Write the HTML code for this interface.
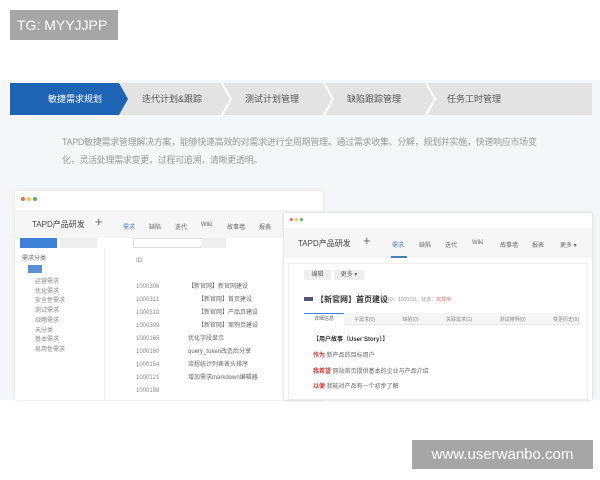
<!DOCTYPE html>
<html><head><meta charset="utf-8"><style>
*{margin:0;padding:0;box-sizing:border-box}
body{width:600px;height:480px;background:#fff;position:relative;overflow:hidden;font-family:"Liberation Sans","Noto Sans CJK SC",sans-serif}
.a{position:absolute}
.t{font-size:6px;color:#666;white-space:nowrap}
</style></head><body>
<div class="a" style="left:10px;top:10px;width:108px;height:30px;background:#a6a6a6;color:#fff;font-size:14px;line-height:30px;padding-left:7px;white-space:nowrap;overflow:hidden">TG: MYYJJPP</div>
<div class="a" style="left:0;top:80px;width:600px;height:320px;background:#f5f6f7"></div>
<svg class="a" style="left:10px;top:83px" width="582" height="32">
<rect x="0" y="0" width="582" height="32" fill="#e3e3e3"/>
<polygon points="0,0 109,0 118,16 109,32 0,32" fill="#1e64b4"/>
<polyline points="212,0 221,16 212,32" fill="none" stroke="#fff" stroke-width="2"/>
<polyline points="314,0 323,16 314,32" fill="none" stroke="#fff" stroke-width="2"/>
<polyline points="416,0 425,16 416,32" fill="none" stroke="#fff" stroke-width="2"/>
</svg>
<div class="a" style="left:10px;top:83px;width:580px;height:32px;font-size:9px;line-height:32px;color:#555">
<span class="a" style="left:38px;color:#fff">敏捷需求规划</span>
<span class="a" style="left:132px">迭代计划&amp;跟踪</span>
<span class="a" style="left:235px">测试计划管理</span>
<span class="a" style="left:337px">缺陷跟踪管理</span>
<span class="a" style="left:437px">任务工时管理</span>
</div>
<div class="a" style="left:62px;top:133px;width:476px;font-size:9px;line-height:18px;color:#999;letter-spacing:-0.3px">TAPD敏捷需求管理解决方案，能够快速高效的对需求进行全周期管理。通过需求收集、分解，规划并实施，快速响应市场变化，灵活处理需求变更，过程可追溯，清晰更透明。</div>

<!-- left window -->
<div class="a" style="left:15px;top:191px;width:308px;height:209px;background:#fff;box-shadow:0 0 3px #ddd;overflow:hidden">
<div class="a" style="left:6px;top:6px;width:4px;height:4px;border-radius:2px;background:#e66"></div>
<div class="a" style="left:12px;top:6px;width:4px;height:4px;border-radius:2px;background:#ec4"></div>
<div class="a" style="left:18px;top:6px;width:4px;height:4px;border-radius:2px;background:#5b5"></div>
<div class="a" style="left:0;top:19px;width:308px;height:28px;background:#f6f6f6"></div>
<div class="a" style="left:17px;top:28px;font-size:8px;color:#444">TAPD产品研发</div>
<div class="a" style="left:80px;top:23px;font-size:13px;color:#666">+</div>
<div class="a t" style="left:108px;top:31px;color:#4a7cc0">需求</div>
<div class="a t" style="left:134px;top:31px">缺陷</div>
<div class="a t" style="left:160px;top:31px">迭代</div>
<div class="a t" style="left:186px;top:31px">Wiki</div>
<div class="a t" style="left:212px;top:31px">故事墙</div>
<div class="a t" style="left:244px;top:31px">报表</div>
<div class="a" style="left:5px;top:47px;width:37px;height:10px;background:#3d82d8"></div>
<div class="a" style="left:45px;top:47px;width:37px;height:10px;background:#eee"></div>
<div class="a" style="left:118px;top:47px;width:70px;height:10px;border:1px solid #ddd"></div>
<div class="a" style="left:186px;top:47px;width:25px;height:10px;background:#eee"></div>
<div class="a" style="left:89px;top:57px;width:219px;height:152px;background:#fff;border-left:1px solid #eee"></div>
<div class="a t" style="left:7px;top:62px">需求分类</div>
<div class="a" style="left:13px;top:74px;width:14px;height:8px;background:#5a8fd0"></div>
<div class="a t" style="left:20px;top:87px;color:#888;line-height:9.7px">运营需求<br>优化需求<br>安全性需求<br>测试需求<br>战略需求<br>未分类<br>基本需求<br>易用性需求</div>
<div class="a t" style="left:121px;top:64px;color:#888;line-height:13px">ID<br><br>1000306<br>1000311<br>1000310<br>1000309<br>1000165<br>1000160<br>1000154<br>1000121<br>1000158<br>1000156</div>
<div class="a t" style="left:173px;top:90px;color:#666;line-height:13px">【新官网】新官网建设<br>&nbsp;&nbsp;&nbsp;&nbsp;&nbsp;&nbsp;【新官网】首页建设<br>&nbsp;&nbsp;&nbsp;&nbsp;&nbsp;&nbsp;【新官网】产品页建设<br>&nbsp;&nbsp;&nbsp;&nbsp;&nbsp;&nbsp;【新官网】案例页建设<br>优化字段显示<br>query_token改造后分享<br>流程统计列表表头排序<br>增加需求markdown编辑器</div>
</div>

<!-- right window -->
<div class="a" style="left:284px;top:213px;width:308px;height:187px;background:#fff;box-shadow:0 0 3px #ccc;overflow:hidden">
<div class="a" style="left:6px;top:5px;width:3px;height:3px;border-radius:2px;background:#e66"></div>
<div class="a" style="left:11px;top:5px;width:3px;height:3px;border-radius:2px;background:#ec4"></div>
<div class="a" style="left:16px;top:5px;width:3px;height:3px;border-radius:2px;background:#5b5"></div>
<div class="a" style="left:0;top:15px;width:308px;height:30px;background:#f6f6f6"></div>
<div class="a" style="left:14px;top:25px;font-size:8px;color:#444">TAPD产品研发</div>
<div class="a" style="left:79px;top:20px;font-size:13px;color:#666">+</div>
<div class="a t" style="left:108px;top:27px;color:#4a7cc0">需求</div>
<div class="a" style="left:107px;top:43px;width:16px;height:2px;background:#4a7cc0"></div>
<div class="a t" style="left:135px;top:27px">缺陷</div>
<div class="a t" style="left:161px;top:27px">迭代</div>
<div class="a t" style="left:188px;top:27px">Wiki</div>
<div class="a t" style="left:216px;top:27px">故事墙</div>
<div class="a t" style="left:248px;top:27px">报表</div>
<div class="a t" style="left:276px;top:27px">更多 ▾</div>
<div class="a" style="left:4px;top:50px;width:300px;height:137px;border:1px solid #eee"></div>
<div class="a t" style="left:20px;top:57px;width:27px;height:10px;background:#eee;text-align:center;line-height:10px">编辑</div>
<div class="a t" style="left:50px;top:57px;width:30px;height:10px;background:#eee;text-align:center;line-height:10px">更多 ▾</div>
<div class="a" style="left:20px;top:84px;width:9px;height:4px;background:#557"></div>
<div class="a" style="left:32px;top:81px;font-size:8px;color:#333;font-weight:bold">【新官网】首页建设</div>
<div class="a t" style="left:104px;top:83px;font-size:5px;color:#999">ID：1000311 &nbsp; 状态：<span style="color:#e66">实现中</span></div>
<div class="a" style="left:20px;top:100px;width:276px;height:12px;background:#f5f5f5;border-bottom:1px solid #e6e6e6"></div>
<div class="a t" style="left:20px;top:100px;width:40px;height:13px;background:#fff;border-top:1px solid #3d82d8;font-size:5px;text-align:center;line-height:11px">详细信息</div>
<div class="a t" style="left:70px;top:103px;font-size:5px;color:#888;word-spacing:26px">子需求(0) 缺陷(0) 关联需求(1) 测试用例(0) 变更历史(9)</div>
<div class="a" style="left:29px;top:121px;font-size:6px;color:#333;font-weight:bold">【用户故事（User Story）】</div>
<div class="a t" style="left:29px;top:137px"><b style="color:#c33">作为</b> 新产品的目标用户</div>
<div class="a t" style="left:29px;top:153px"><b style="color:#c33">我希望</b> 网站首页提供基本的企业与产品介绍</div>
<div class="a t" style="left:29px;top:168px"><b style="color:#c33">以便</b> 我能对产品有一个初步了解</div>
</div>

<div class="a" style="left:412px;top:440px;width:181px;height:29px;background:#a6a6a6;color:#fff;font-size:15px;line-height:29px;text-align:center">www.userwanbo.com</div>
</body></html>
